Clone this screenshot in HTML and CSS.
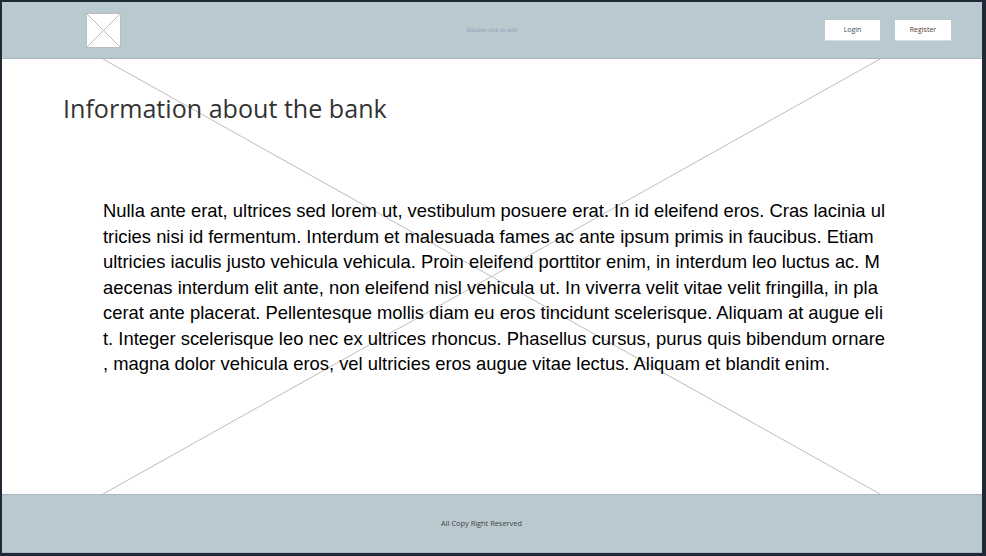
FILE: index.html
```html
<!DOCTYPE html>
<html lang="en">
  <head>
    <meta charset="UTF-8" />
    <meta name="viewport" content="width=device-width, initial-scale=1.0" />
    <title>Information about the bank</title>
    <link rel="stylesheet" href="styles.css">
  </head>

  <body>
    <div class="frame">
      <!-- Header -->
      <div class="header">
        <div class="logo">
          <svg width="35" height="35" viewBox="0 0 35 35">
            <rect x="0.5" y="0.5" width="34" height="34" fill="#fff" stroke="#bdbdbd" />
            <path d="M0.5 0.5 L34.5 34.5 M34.5 0.5 L0.5 34.5" stroke="#bdbdbd" fill="none" />
          </svg>
        </div>
        <div class="header-note">Double click to edit</div>
        <div class="header-buttons">
          <button class="btn btn-login">Login</button>
          <button class="btn btn-register">Register</button>
        </div>
      </div>

      <!-- Main content, with the placeholder cross behind the text -->
      <div class="main">
        <svg class="cross" viewBox="0 0 777 435" preserveAspectRatio="none">
          <path d="M0 0 L777 435 M777 0 L0 435" stroke="#bdbdbd" fill="none" />
        </svg>
        <h1>Information about the bank</h1>
        <p class="info">Nulla ante erat, ultrices sed lorem ut, vestibulum posuere erat. In id eleifend eros. Cras lacinia ultricies nisi id fermentum. Interdum et malesuada fames ac ante ipsum primis in faucibus. Etiam ultricies iaculis justo vehicula vehicula. Proin eleifend porttitor enim, in interdum leo luctus ac. Maecenas interdum elit ante, non eleifend nisl vehicula ut. In viverra velit vitae velit fringilla, in placerat ante placerat. Pellentesque mollis diam eu eros tincidunt scelerisque. Aliquam at augue elit. Integer scelerisque leo nec ex ultrices rhoncus. Phasellus cursus, purus quis bibendum ornare<wbr>, magna dolor vehicula eros, vel ultricies eros augue vitae lectus. Aliquam et blandit enim.</p>
      </div>

      <!-- Footer -->
      <div class="footer">All Copy Right Reserved</div>
    </div>
  </body>
</html>
```

FILE: styles.css
```css
html,
body {
  height: 100%;
}

body {
  margin: 0;
  background-color: #1f2a36;
  font-family: "Liberation Sans", Arial, sans-serif;
  overflow: hidden;
}

.frame {
  display: flex;
  flex-direction: column;
  box-sizing: border-box;
  width: 980px;
  height: 551px;
  margin: 2px 0 0 2px;
  background-color: #fff;
}

.header {
  display: flex;
  align-items: center;
  flex: none;
  box-sizing: border-box;
  height: 57px;
  padding: 0 31px 0 84px;
  background-color: #b9c9d0;
  border-bottom: 1px solid #aab5bb;
}

.logo {
  display: flex;
  flex: none;
  width: 35px;
  height: 35px;
}

.header-note {
  flex: 1;
  padding-left: 38px;
  text-align: center;
  font-family: "Open Sans", sans-serif;
  font-size: 5.7px;
  color: #8d9db5;
}

.header-buttons {
  display: flex;
  gap: 15px;
}

.btn {
  width: 56px;
  height: 21px;
  padding: 0;
  border: none;
  border-bottom: 1px solid #d5dde0;
  background-color: #fff;
  font-family: "Open Sans", sans-serif;
  font-size: 7px;
}

.btn-login {
  width: 55px;
  color: #3a4a5a;
}

.btn-register {
  color: #5a3a2a;
}

.main {
  position: relative;
  flex: 1;
  padding: 0 95px 0 61px;
}

.cross {
  position: absolute;
  left: 101px;
  top: 0;
  width: 777px;
  height: 100%;
}

h1 {
  position: relative;
  margin: 32px 0 0;
  font-family: "Open Sans", sans-serif;
  font-size: 25.1px;
  font-weight: 400;
  line-height: 34px;
  color: #333;
}

.info {
  position: relative;
  margin: 73px 0 0 40px;
  font-size: 18.4px;
  line-height: 25.5px;
  color: #000;
  word-break: break-all;
}

.footer {
  flex: none;
  box-sizing: border-box;
  height: 59px;
  padding-top: 23px;
  padding-right: 21px;
  background-color: #b9c9d0;
  border-top: 1px solid #b0b5ba;
  border-bottom: 1px solid #a9b4ba;
  text-align: center;
  font-family: "Open Sans", sans-serif;
  font-size: 7.4px;
  color: #444;
}
```
